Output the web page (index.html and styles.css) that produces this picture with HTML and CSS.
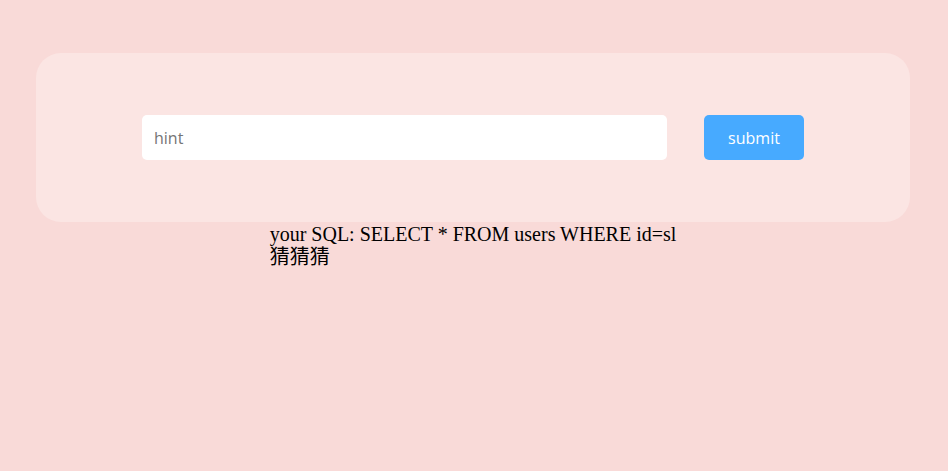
FILE: index.html
```html
<!DOCTYPE html>
<html>
<head>
<meta charset="utf-8">
<link rel="stylesheet" href="styles.css">
</head>
<body>
<div class="card">
  <form class="form">
    <input class="field" type="text" placeholder="hint">
    <button class="btn" type="button">submit</button>
  </form>
</div>
<div class="result">your SQL: SELECT * FROM users WHERE id=sl<br>猜猜猜</div>
</body>
</html>
```
FILE: styles.css
```css
html, body {
  margin: 0;
  padding: 0;
  background: #f9dad8;
}
body {
  padding: 53px 38px 0 36px;
  font-family: "Liberation Serif", "Noto Sans CJK SC", serif;
}
.card {
  height: 169px;
  background: #fbe5e3;
  border-radius: 25px;
  display: flex;
  align-items: center;
  justify-content: center;
}
.form {
  display: flex;
  gap: 37px;
  margin: 0;
}
.field {
  box-sizing: border-box;
  width: 525px;
  height: 45px;
  border: none;
  border-radius: 5px;
  background: #fff;
  padding: 0 12px;
  font-family: "Open Sans", sans-serif;
  font-size: 16px;
  color: #333;
  outline: none;
}
.field::placeholder {
  color: #757575;
}
.btn {
  width: 100px;
  height: 45px;
  border: none;
  border-radius: 5px;
  background: #47aaff;
  color: #fff;
  font-family: "Open Sans", sans-serif;
  font-size: 16px;
  padding: 0;
}
.result {
  width: fit-content;
  margin: 1px auto 0;
  font-size: 20px;
  line-height: 23px;
  color: #000;
}
```
